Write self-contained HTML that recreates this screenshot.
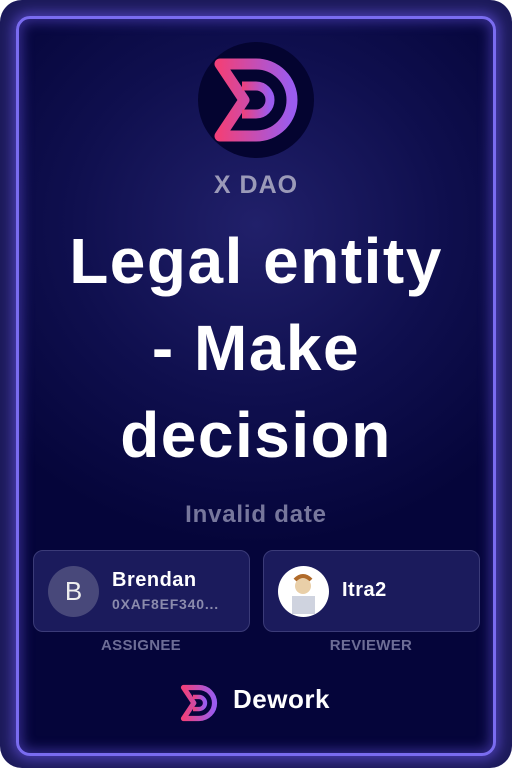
<!DOCTYPE html>
<html><head><style>
html,body{margin:0;padding:0;background:#fff;}
body{width:512px;height:768px;position:relative;overflow:hidden;font-family:"Liberation Sans",sans-serif;}
.outer{position:absolute;left:0;top:0;width:512px;height:768px;border-radius:22px;background:#1c1a5a;}
.inner{position:absolute;left:16px;top:16px;width:474px;height:734px;border:3px solid #7a6cf0;border-radius:14px;
background:radial-gradient(ellipse 340px 320px at 50% 28%,#21206a 0%,#0f0f4e 55%,#05053a 100%);
box-shadow:0 0 12px 4px rgba(110,90,240,.55), inset 0 0 12px 3px rgba(110,90,240,.45);}
.logo{position:absolute;left:198px;top:42px;width:116px;height:116px;border-radius:50%;background:#040430;}
.dao{position:absolute;left:0;width:512px;top:171px;text-align:center;color:#9b9ab8;font-weight:bold;font-size:25px;letter-spacing:1px;}
.title{position:absolute;left:0;width:512px;top:218px;text-align:center;color:#fff;font-weight:bold;font-size:64px;line-height:87px;letter-spacing:1.5px;}
.date{position:absolute;left:0;width:512px;top:501px;text-align:center;color:#77779c;font-weight:bold;font-size:24px;letter-spacing:.8px;}
.card{position:absolute;top:550px;width:215px;height:80px;border:1px solid #3b3b78;border-radius:10px;background:#1b1b5c;}
.av{position:absolute;left:14px;top:15px;width:51px;height:51px;border-radius:50%;}
.name{position:absolute;left:78px;top:18px;color:#fff;font-weight:bold;font-size:20px;letter-spacing:.5px;}
.addr{position:absolute;left:78px;top:45px;color:#8b8bad;font-weight:bold;font-size:14px;letter-spacing:.8px;}
.lbl{position:absolute;top:637px;width:216px;text-align:center;color:#6d6d96;font-weight:bold;font-size:15px;letter-spacing:.3px;}
.dw{position:absolute;left:233px;top:684px;color:#fff;font-weight:bold;font-size:26px;letter-spacing:.5px;}
</style></head><body>
<div class="outer"></div>
<div class="inner"></div>
<div class="logo"></div>
<svg style="position:absolute;left:198px;top:42px" width="116" height="116" viewBox="0 0 116 116">
<defs><linearGradient id="g" x1="0" x2="1"><stop offset="0" stop-color="#f0407a"/><stop offset="1" stop-color="#9a5cf0"/></linearGradient></defs>
<path d="M22 22 H58 A36 36 0 0 1 58 94 H22 L46 58 Z" fill="none" stroke="url(#g)" stroke-width="11" stroke-linejoin="round"/>
<path d="M44 44 H58 A14 14 0 0 1 58 72 H44" fill="none" stroke="url(#g)" stroke-width="9"/>
</svg>
<div class="dao">X DAO</div>
<div class="title">Legal entity<br>- Make<br>decision</div>
<div class="date">Invalid date</div>
<div class="card" style="left:33px">
<div class="av" style="background:#48487a;color:#eee;font-size:26px;text-align:center;line-height:51px">B</div>
<div class="name">Brendan</div><div class="addr">0XAF8EF340...</div></div>
<div class="card" style="left:263px">
<div class="av" style="background:#fff"><svg width="51" height="51"><rect x="14" y="30" width="23" height="18" fill="#cfd3df"/><circle cx="25" cy="20" r="8" fill="#e9cfa8"/><path d="M17 14 Q25 6 33 14" stroke="#b06a2a" stroke-width="4" fill="none"/></svg></div>
<div class="name" style="top:28px">Itra2</div></div>
<div class="lbl" style="left:33px">ASSIGNEE</div>
<div class="lbl" style="left:263px">REVIEWER</div>
<svg style="position:absolute;left:174px;top:678px" width="50" height="50" viewBox="0 0 116 116">
<path d="M22 22 H58 A36 36 0 0 1 58 94 H22 L46 58 Z" fill="none" stroke="url(#g)" stroke-width="12" stroke-linejoin="round"/>
<path d="M44 44 H58 A14 14 0 0 1 58 72 H44" fill="none" stroke="url(#g)" stroke-width="10"/>
</svg>
<div class="dw">Dework</div>
</body></html>
